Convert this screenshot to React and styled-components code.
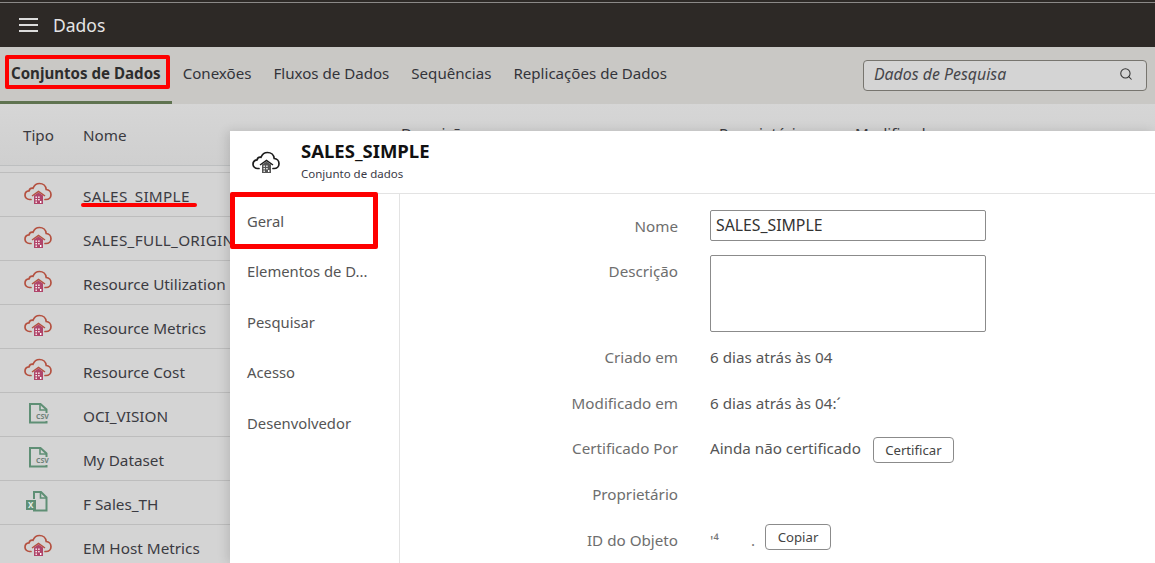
import React from "react";
import styled, { createGlobalStyle } from "styled-components";
import { Search } from "lucide-react";

const FONT = `"Noto Sans", "Open Sans", sans-serif`;

const tabs = ["Conjuntos de Dados", "Conexões", "Fluxos de Dados", "Sequências", "Replicações de Dados"];

const datasets = [
  { name: "SALES_SIMPLE", kind: "cloud", wide: true },
  { name: "SALES_FULL_ORIGINAL", kind: "cloud", wide: true },
  { name: "Resource Utilization", kind: "cloud" },
  { name: "Resource Metrics", kind: "cloud" },
  { name: "Resource Cost", kind: "cloud" },
  { name: "OCI_VISION", kind: "csv" },
  { name: "My Dataset", kind: "csv" },
  { name: "F Sales_TH", kind: "xls" },
  { name: "EM Host Metrics", kind: "cloud" },
];

const sideItems = ["Geral", "Elementos de D...", "Pesquisar", "Acesso", "Desenvolvedor"];

const CloudIcon = ({ color, fill }) => (
  <svg width="28" height="22" viewBox="0 0 28 22" fill="none">
    <path
      d="M7 17.5H5.500C3 17.500 1 15.600 1 13.200c0-2.300 1.800-4.100 4-4.300C5.600 6.900 7.300 6 9 6.300 10.200 3.200 12.800 1.500 15.500 1.500c3.600 0 6.400 2.600 6.700 6 2.700.3 4.800 2.500 4.800 5.200 0 2.700-2.200 4.800-4.900 4.800H21"
      stroke={color}
      strokeWidth="1.700"
      strokeLinecap="round"
    />
    <path d="M8 14 14.500 9.500 21 14" stroke={color} strokeWidth="1.500" fill="none" />
    <path d="M10 13.500 14.500 10.500l4.500 3V22h-9z" fill={fill} />
    <rect x="11.500" y="14.500" width="1.400" height="1.400" fill="#fff" />
    <rect x="14.200" y="14.500" width="1.400" height="1.400" fill="#fff" />
    <rect x="11.500" y="17" width="1.400" height="1.400" fill="#fff" />
    <rect x="14.200" y="17" width="1.400" height="1.400" fill="#fff" />
    <rect x="11.500" y="19.500" width="1.400" height="1.400" fill="#fff" />
    <rect x="16" y="19" width="1.400" height="2" fill="#fff" />
  </svg>
);

const CsvIcon = () => (
  <svg width="28" height="24" viewBox="0 0 28 24" fill="none">
    <path d="M22.500 12V8.500L16.500 3H6v18.500h16.500V20" stroke="#5f8f75" strokeWidth="2" />
    <path d="M16 3v6h6.500" stroke="#5f8f75" strokeWidth="1.600" />
    <text x="12" y="18" fontFamily={FONT} fontSize="7" fontWeight="700" fill="#6d8078">
      CSV
    </text>
  </svg>
);

const XlsIcon = () => (
  <svg width="28" height="24" viewBox="0 0 28 24" fill="none">
    <path d="M10 10V3h7l5.500 5.500V21.500H10V21" stroke="#5f8f75" strokeWidth="2" />
    <path d="M16.500 3v6h6" stroke="#5f8f75" strokeWidth="1.600" />
    <rect x="2" y="11" width="10" height="10" fill="#5f8f75" />
    <text x="4" y="19" fontFamily={FONT} fontSize="8" fontWeight="700" fill="#e8efe9">
      X
    </text>
  </svg>
);

const DatasetIcon = ({ kind }) => {
  if (kind === "csv") return <CsvIcon />;
  if (kind === "xls") return <XlsIcon />;
  return <CloudIcon color="#b4503f" fill="#b0456a" />;
};

const App = () => {
  return (
    <Page>
      <GlobalStyle />
      <TopBar>
        <Hamburger>
          <span />
          <span />
          <span />
        </Hamburger>
        <TopTitle>Dados</TopTitle>
      </TopBar>
      <TabBar>
        {tabs.map((t, i) => (
          <Tab key={t} $active={i === 0}>
            {t}
          </Tab>
        ))}
        <SearchBox>
          <SearchText>Dados de Pesquisa</SearchText>
          <Search size={14} strokeWidth={1.8} color="#333" />
        </SearchBox>
      </TabBar>
      <ListHead>
        <TipoHead>Tipo</TipoHead>
        <NomeHead>Nome</NomeHead>
        <DescHead>Descrição</DescHead>
        <OwnerHead>Proprietário</OwnerHead>
        <ModHead>Modificado</ModHead>
      </ListHead>
      <List>
        {datasets.map((d) => (
          <Row key={d.name}>
            <IconCell>
              <DatasetIcon kind={d.kind} />
            </IconCell>
            <RowName $wide={d.wide}>{d.name}</RowName>
          </Row>
        ))}
      </List>

      <Panel>
        <PanelHead>
          <PanelIcon>
            <CloudIcon color="#1c1c1c" fill="#555" />
          </PanelIcon>
          <div>
            <PanelTitle>SALES_SIMPLE</PanelTitle>
            <PanelSub>Conjunto de dados</PanelSub>
          </div>
        </PanelHead>
        <PanelBody>
          <Side>
            {sideItems.map((s) => (
              <SideItem key={s}>{s}</SideItem>
            ))}
          </Side>
          <Form>
            <InputRow>
              <Label>Nome</Label>
              <NameInput>SALES_SIMPLE</NameInput>
            </InputRow>
            <AreaRow>
              <AreaLabel>Descrição</AreaLabel>
              <TextArea />
            </AreaRow>
            <InfoRow>
              <Label>Criado em</Label>
              <Value>6 dias atrás às 04</Value>
            </InfoRow>
            <InfoRow>
              <Label>Modificado em</Label>
              <Value>6 dias atrás às 04:´</Value>
            </InfoRow>
            <InfoRow>
              <Label>Certificado Por</Label>
              <Value>Ainda não certificado</Value>
              <SmallButton $left={12} $width={81} $lift={-3}>Certificar</SmallButton>
            </InfoRow>
            <InfoRow>
              <Label>Proprietário</Label>
            </InfoRow>
            <InfoRow>
              <Label>ID do Objeto</Label>
              <Redacted>
                <span>'⁴</span>
                <span>.</span>
              </Redacted>
              <SmallButton $left={10} $width={66} $lift={5}>Copiar</SmallButton>
            </InfoRow>
          </Form>
        </PanelBody>
      </Panel>

      <TabMark />
      <SideMark />
      <NameMark />
    </Page>
  );
};

export default App;

const GlobalStyle = createGlobalStyle`
  html, body {
    margin: 0;
    padding: 0;
    height: 100%;
    overflow: hidden;
    font-family: ${FONT};
  }
  * {
    box-sizing: border-box;
  }
`;

const Page = styled.div`
  position: relative;
  width: 1155px;
  height: 563px;
  overflow: hidden;
  background: #d4d4d4;
`;

const TopBar = styled.div`
  height: 47px;
  background: #2d2926;
  border-top: 2px solid #2d2926;
  box-shadow: inset 0 1px 0 #8b8987;
  display: flex;
  align-items: center;
  padding: 0 0 0 19px;
`;

const Hamburger = styled.div`
  width: 19px;
  display: flex;
  flex-direction: column;
  gap: 4px;
  span {
    height: 2px;
    background: #dcdcdc;
  }
`;

const TopTitle = styled.div`
  margin-left: 15px;
  color: #e4e4e4;
  font-size: 17.500px;
`;

const TabBar = styled.div`
  height: 57px;
  background: #c9c8c5;
  display: flex;
  align-items: stretch;
`;

const Tab = styled.div`
  padding: 0 11px 3px;
  display: flex;
  align-items: center;
  font-size: 15.100px;
  color: ${(p) => (p.$active ? "#2d2d2d" : "#33343a")};
  font-weight: ${(p) => (p.$active ? 700 : 400)};
  border-bottom: 3px solid ${(p) => (p.$active ? "#5f7350" : "transparent")};
`;

const SearchBox = styled.div`
  margin: 13px 8px 0 auto;
  width: 284px;
  height: 31px;
  border: 1px solid #77756f;
  border-radius: 4px;
  background: #d4d4d4;
  display: flex;
  align-items: center;
  justify-content: space-between;
  padding: 0 13px 3px 10px;
`;

const SearchText = styled.span`
  font-size: 15.900px;
  font-style: italic;
  color: #46464a;
`;

const ListHead = styled.div`
  position: relative;
  height: 62px;
  background: linear-gradient(#d6d6d6, #cfcfcf);
  border-bottom: 1px solid #bdbfc0;
  display: flex;
  align-items: center;
  font-size: 15.200px;
  color: #3a3a40;
`;

const TipoHead = styled.div`
  margin-left: 23px;
  width: 60px;
`;

const NomeHead = styled.div`
  width: 318px;
`;

const DescHead = styled.div`
  width: 318px;
  margin-bottom: 4px;
`;

const OwnerHead = styled.div`
  width: 136px;
  margin-bottom: 4px;
`;

const ModHead = styled.div`
  margin-bottom: 4px;
`;

const List = styled.div`
  margin-top: 6px;
  border-top: 1px solid #bdbdbd;
`;

const Row = styled.div`
  height: 44px;
  display: flex;
  align-items: center;
  padding-left: 24px;
  border-bottom: 1px solid #bdbdbd;
`;

const IconCell = styled.div`
  width: 59px;
  display: flex;
  padding-bottom: 4px;
`;

const RowName = styled.div`
  font-size: 15.300px;
  letter-spacing: ${(p) => (p.$wide ? "0.3px" : "0")};
  padding-top: 2px;
  color: #3b3b42;
  white-space: nowrap;
`;

const Panel = styled.div`
  position: absolute;
  left: 230px;
  top: 131px;
  right: 0;
  bottom: 0;
  background: #fff;
  box-shadow: -3px 0 10px rgba(0, 0, 0, 0.12);
  display: flex;
  flex-direction: column;
`;

const PanelHead = styled.div`
  height: 63px;
  border-bottom: 1px solid #e3e3e3;
  display: flex;
  align-items: center;
  padding: 0 0 0 22px;
`;

const PanelIcon = styled.div`
  width: 49px;
  display: flex;
`;

const PanelTitle = styled.div`
  font-size: 18.500px;
  font-weight: 700;
  color: #111;
  line-height: 22px;
  margin-top: -2px;
`;

const PanelSub = styled.div`
  font-size: 11.500px;
  color: #3a3a46;
  line-height: 18px;
  margin-top: 3px;
`;

const PanelBody = styled.div`
  flex: 1;
  display: flex;
`;

const Side = styled.div`
  width: 170px;
  border-right: 1px solid #e3e3e3;
  padding: 1.800px 0 0 17px;
`;

const SideItem = styled.div`
  height: 50.400px;
  display: flex;
  align-items: center;
  font-size: 14.800px;
  color: #555;
  white-space: nowrap;
`;

const Form = styled.div`
  padding-top: 16px;
  font-size: 15.200px;
`;

const InputRow = styled.div`
  display: flex;
  align-items: center;
  height: 31px;
  margin-bottom: 14px;
`;

const AreaRow = styled.div`
  display: flex;
  align-items: flex-start;
  height: 77px;
  margin-bottom: 2px;
`;

const InfoRow = styled.div`
  display: flex;
  align-items: center;
  height: 45.700px;
`;

const Label = styled.div`
  width: 278px;
  margin-right: 32px;
  text-align: right;
  color: #6e6e6e;
  white-space: nowrap;
`;

const AreaLabel = styled(Label)`
  margin-top: 6px;
`;

const NameInput = styled.div`
  width: 276px;
  height: 31px;
  border: 1px solid #8b8b8b;
  border-radius: 2px;
  padding: 0 5px 2px;
  display: flex;
  align-items: center;
  font-size: 15.800px;
  color: #333;
`;

const TextArea = styled.div`
  width: 276px;
  height: 77px;
  border: 1px solid #8b8b8b;
  border-radius: 2px;
`;

const Value = styled.div`
  color: #555;
  white-space: nowrap;
`;

const SmallButton = styled.div`
  margin-left: ${(p) => p.$left}px;
  margin-bottom: ${(p) => p.$lift}px;
  width: ${(p) => p.$width}px;
  height: 26px;
  border: 1px solid #8b8b8b;
  border-radius: 4px;
  display: flex;
  align-items: center;
  justify-content: center;
  font-size: 13.200px;
  color: #444;
`;

const Redacted = styled.div`
  width: 45px;
  display: flex;
  justify-content: space-between;
  color: #777;
`;

const TabMark = styled.div`
  position: absolute;
  left: 5px;
  top: 55px;
  width: 165px;
  height: 34px;
  border: 4px solid #fe0000;
  border-radius: 2px;
`;

const SideMark = styled.div`
  position: absolute;
  left: 230px;
  top: 192px;
  width: 148px;
  height: 57px;
  border: 5px solid #fe0000;
  border-radius: 2px;
`;

const NameMark = styled.div`
  position: absolute;
  left: 81px;
  top: 203px;
  width: 116px;
  height: 4px;
  background: #fe0000;
  border-radius: 2px;
`;
